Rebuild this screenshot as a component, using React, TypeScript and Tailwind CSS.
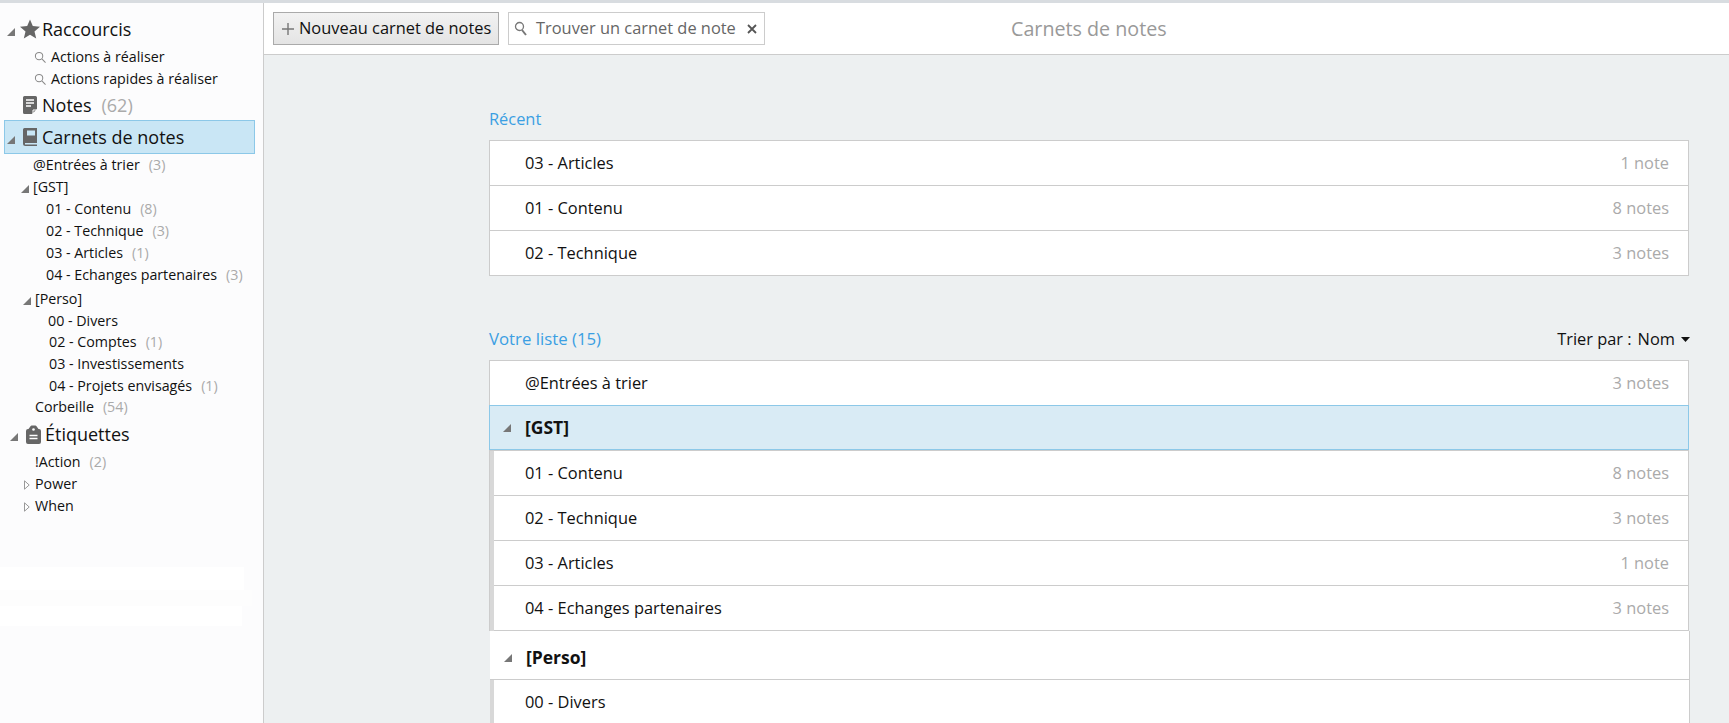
import React from "react";

const Down = () => (
  <svg width="8" height="8" viewBox="0 0 8 8" className="shrink-0 fill-[#777]"><path d="M8 0V8H0Z" /></svg>
);
const Right = () => (
  <svg width="6" height="10" viewBox="0 0 6 10" className="shrink-0"><path d="M.5.8 5.200 5 .5 9.200Z" fill="#fff" stroke="#999" /></svg>
);
const Count = ({ n }: { n: number }) => <span className="text-[#aaa] ml-[9px]">({n})</span>;

const Mag = () => (
  <svg width="12" height="12" viewBox="0 0 13 13" fill="none" stroke="#888" strokeWidth="1.100" className="shrink-0"><circle cx="5.500" cy="5.500" r="4" /><path d="M8.500 8.500 12.500 12.500" /></svg>
);

const Head = ({ tri, icon, label, n, cls = "" }: { tri?: boolean; icon: React.ReactNode; label: string; n?: number; cls?: string }) => (
  <div className={"flex items-center text-[18px] text-[#111] " + cls}>
    <div className="w-[18px] pl-[7px] pt-[5px] flex shrink-0">{tri && <Down />}</div>
    <div className="w-[24px] flex justify-center shrink-0">{icon}</div>
    <span>{label}</span>
    {n !== undefined && <span className="text-[#aaa] ml-[10px]">({n})</span>}
  </div>
);

const Item = ({ label, n, cls, tri }: { label: string; n?: number; cls: string; tri?: "d" | "r" }) => (
  <div className={"h-[22px] flex items-center text-[14.250px] text-[#111] relative " + cls}>
    {tri === "d" && <span className="absolute -ml-[12px] mt-[3px] flex"><Down /></span>}
    {tri === "r" && <span className="absolute -ml-[11px] mt-[1px] flex"><Right /></span>}
    <span>{label}</span>
    {n !== undefined && <Count n={n} />}
  </div>
);

const Row = ({ label, note, cls }: { label: string; note?: string; cls: string }) => (
  <div className={"bg-white flex items-center justify-between pr-[19px] text-[16.400px] text-[#111] " + cls}>
    <span>{label}</span>
    <span className="text-[#aaa]">{note}</span>
  </div>
);

const Sub = ({ label, note }: { label: string; note?: string }) => (
  <div className="border-l-[4px] border-[#d8d8d8]">
    <Row label={label} note={note} cls="h-[45px] border-b border-[#ccc] pl-[31px]" />
  </div>
);

export default function App() {
  return (
    <div className="w-[1729px] h-[723px] overflow-hidden flex flex-col font-['Open_Sans',sans-serif] bg-white">
      <div className="h-[3px] bg-[#d8dce0] shrink-0" />
      <div className="flex flex-1 min-h-0">
        <aside className="w-[264px] shrink-0 bg-[#fcfcfd] border-r border-[#ccc] pt-[12px]">
          <Head tri label="Raccourcis" cls="h-[28px]" icon={<svg width="22" height="22" viewBox="0 0 22 22" fill="#666"><path d="M11 1.500l2.800 6.600 7.200.6-5.500 4.700 1.700 7-6.200-3.700-6.200 3.700 1.700-7L1 8.700l7.200-.6z" /></svg>} />
          <div className="flex items-center h-[22px] pl-[34px] gap-[5px] text-[14.250px] text-[#111] mt-[3px]"><Mag /><span>Actions à réaliser</span></div>
          <div className="flex items-center h-[22px] pl-[34px] gap-[5px] text-[14.250px] text-[#111]"><Mag /><span>Actions rapides à réaliser</span></div>
          <Head label="Notes" n={62} cls="h-[32px] -mt-[1px]" icon={<svg width="14" height="18" viewBox="0 0 14 18"><path d="M1.500 0h11A1.500 1.500 0 0 1 14 1.500V13l-5 5H1.500A1.500 1.500 0 0 1 0 16.500V1.500A1.500 1.500 0 0 1 1.500 0z" fill="#666" /><path d="M3 4h8M3 7h8M3 10h5" stroke="#fff" strokeWidth="1.300" /><path d="M10 18v-4h4" fill="none" stroke="#fff" /></svg>} />
          <div className="ml-[4px] mr-[8px] mt-[-1px] h-[34px] bg-[#c9e6f5] border border-[#8cc8e8] flex items-center">
            <div className="-ml-[5px] w-full"><Head tri label="Carnets de notes" icon={<svg width="14" height="18" viewBox="0 0 14 18"><path d="M1.500 0H14v18H2.500A2.500 2.500 0 0 1 0 15.500v-14A1.500 1.500 0 0 1 1.500 0z" fill="#666" /><rect x="4" y="2.500" width="8" height="5" fill="#c9e6f5" /><path d="M2 15h12v1.500H2z" fill="#c9e6f5" /></svg>} /></div>
          </div>
          <div>
            <Item label="@Entrées à trier" n={3} cls="pl-[33px]" />
            <Item tri="d" label="[GST]" cls="pl-[33px]" />
            <Item label="01 - Contenu" n={8} cls="pl-[46px]" />
            <Item label="02 - Technique" n={3} cls="pl-[46px]" />
            <Item label="03 - Articles" n={1} cls="pl-[46px]" />
            <Item label="04 - Echanges partenaires" n={3} cls="pl-[46px]" />
            <Item tri="d" label="[Perso]" cls="pl-[35px] mt-[2px]" />
            <Item label="00 - Divers" cls="pl-[48px]" />
            <Item label="02 - Comptes" n={1} cls="pl-[49px] -mt-[1px]" />
            <Item label="03 - Investissements" cls="pl-[49px]" />
            <Item label="04 - Projets envisagés" n={1} cls="pl-[49px]" />
            <Item label="Corbeille" n={54} cls="pl-[35px] -mt-[1px]" />
          </div>
          <Head tri label="Étiquettes" cls="h-[32px] pl-[3px]" icon={<svg width="15" height="19" viewBox="0 0 15 19"><path d="M5.500.5h4a1 1 0 0 1 .8.400L12.500 4h.5a2 2 0 0 1 2 2v11a2 2 0 0 1-2 2H2a2 2 0 0 1-2-2V6a2 2 0 0 1 2-2h.5L4.700.9a1 1 0 0 1 .8-.4z" fill="#666" /><circle cx="7.500" cy="4.500" r="1.300" fill="#fff" /><path d="M3.500 10.500h8M3.500 13.500h8" stroke="#fff" strokeWidth="1.300" /></svg>} />
          <Item label="!Action" n={2} cls="pl-[35px] mt-[1px]" />
          <Item tri="r" label="Power" cls="pl-[35px]" />
          <Item tri="r" label="When" cls="pl-[35px]" />
          <div className="mt-[50px] flex flex-col items-start">
            <div className="w-[244px] h-[23px] bg-white" />
            <div className="w-[252px] h-[16px] bg-[#fdfdfd]" />
            <div className="w-[242px] h-[20px] bg-white" />
          </div>
        </aside>
        <div className="flex-1 min-w-0 flex flex-col">
          <header className="h-[52px] shrink-0 bg-white border-b border-[#ccc] flex items-center relative">
            <div className="ml-[9px] h-[33px] w-[226px] border border-[#aaa] bg-gradient-to-b from-[#f2f2f2] to-[#e4e4e4] flex items-center text-[16.400px] text-[#111] whitespace-nowrap">
              <svg width="14" height="14" viewBox="0 0 14 14" stroke="#777" strokeWidth="1.400" className="ml-[7px] mr-[4px] shrink-0"><path d="M7 1v12M1 7h12" /></svg>
              <span>Nouveau carnet de notes</span>
            </div>
            <div className="ml-[9px] h-[33px] w-[257px] border border-[#ccc] bg-white flex items-center text-[16.400px] text-[#666] whitespace-nowrap">
              <svg width="14" height="15" viewBox="0 0 14 15" fill="none" stroke="#777" strokeWidth="1.300" className="ml-[5px] shrink-0"><circle cx="5.500" cy="5.500" r="4" /><path d="M8 9l4 5" strokeWidth="2" /></svg>
              <span className="ml-[8px]">Trouver un carnet de note</span>
              <svg width="10" height="10" viewBox="0 0 10 10" stroke="#555" strokeWidth="1.800" className="ml-auto mr-[7px] shrink-0"><path d="M1 1l8 8M9 1l-8 8" /></svg>
            </div>
            <div className="absolute left-[747px] text-[19.700px] text-[#999]">Carnets de notes</div>
          </header>
          <main className="flex-1 min-h-0 overflow-hidden bg-[#edf0f1] pl-[225px] pr-[40px] pt-[52px]">
            <div className="h-[24px] mb-[9px] flex items-center text-[16.400px] text-[#3b9fe3]">Récent</div>
            <div className="border-x border-t border-[#ccc]">
              <Row label="03 - Articles" note="1 note" cls="h-[45px] border-b border-[#ccc] pl-[35px]" />
              <Row label="01 - Contenu" note="8 notes" cls="h-[45px] border-b border-[#ccc] pl-[35px]" />
              <Row label="02 - Technique" note="3 notes" cls="h-[45px] border-b border-[#ccc] pl-[35px]" />
            </div>
            <div className="h-[24px] mt-[51px] mb-[9px] flex items-center justify-between text-[16.400px]">
              <span className="text-[#3b9fe3] text-[16.800px]">Votre liste (15)</span>
              <div className="flex items-center text-[#111]">
                <span>Trier par :</span><span className="ml-[6px]">Nom</span>
                <svg width="9" height="5" viewBox="0 0 9 5" className="ml-[6px] -mr-[1px]"><path d="M0 0h9L4.500 5z" fill="#111" /></svg>
              </div>
            </div>
            <div className="border-x border-t border-[#ccc]">
              <Row label="@Entrées à trier" note="3 notes" cls="h-[44px] pl-[35px]" />
              <div className="-mx-[1px] h-[46px] border-b border-[#ccc]">
                <div className="h-[45px] bg-[#d9ebf5] border border-[#8cc8e8] flex items-center pl-[13px] font-bold text-[17.500px] text-[#111]">
                  <Down />
                  <span className="ml-[14px]">[GST]</span>
                </div>
              </div>
              <Sub label="01 - Contenu" note="8 notes" />
              <Sub label="02 - Technique" note="3 notes" />
              <Sub label="03 - Articles" note="1 note" />
              <Sub label="04 - Echanges partenaires" note="3 notes" />
            </div>
            <div className="ml-[1px] -mr-[1px] border-r border-[#ccc]">
              <div className="h-[49px] bg-white border-b border-[#ccc] flex items-center pl-[14px] pt-[5px] font-bold text-[17.500px] text-[#111]">
                <Down />
                <span className="ml-[14px]">[Perso]</span>
              </div>
              <Sub label="00 - Divers" />
            </div>
          </main>
        </div>
      </div>
    </div>
  );
}
